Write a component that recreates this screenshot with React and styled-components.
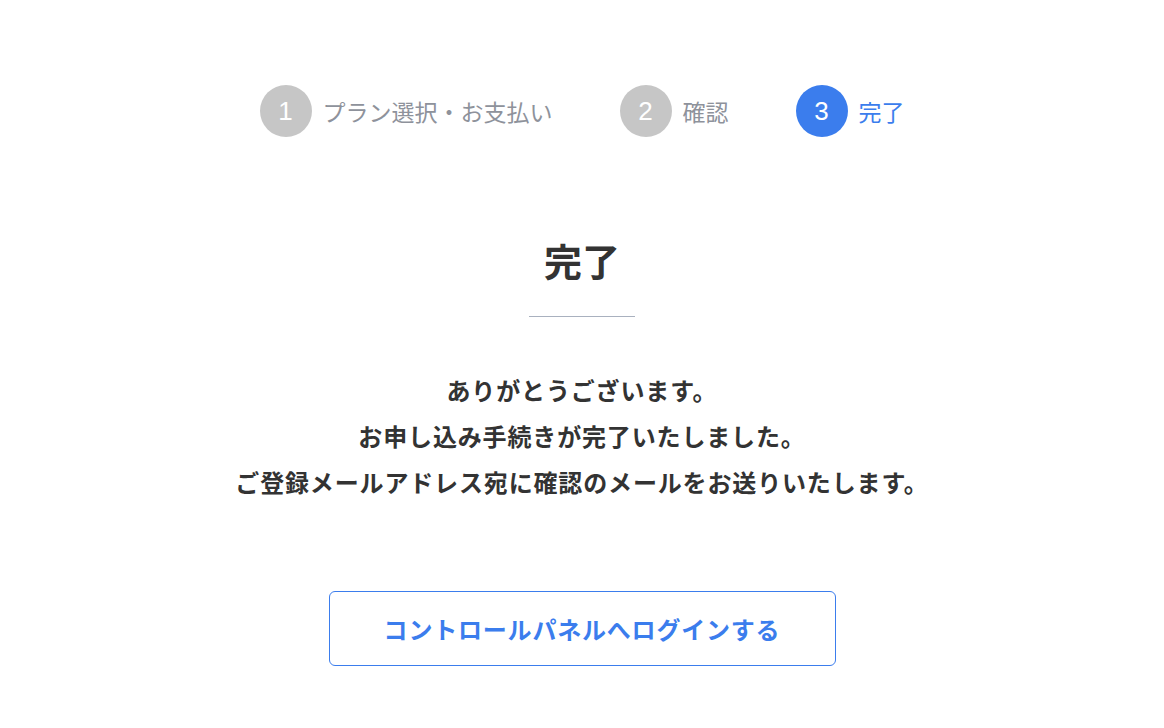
import React from 'react';
import styled, { createGlobalStyle } from 'styled-components';

const GlobalStyle = createGlobalStyle`
  html, body {
    margin: 0;
    padding: 0;
    background: #ffffff;
  }
  body {
    font-family: "Noto Sans CJK JP", "Noto Sans", sans-serif;
    color: #333333;
  }
`;

const Page = styled.main`
  display: flex;
  flex-direction: column;
  align-items: center;
  padding-top: 85px;
  min-height: 728px;
  box-sizing: border-box;
`;

const Steps = styled.ol`
  display: flex;
  align-items: center;
  gap: 67px;
  list-style: none;
  margin: 0;
  padding: 0;
`;

const Step = styled.li`
  display: flex;
  align-items: center;
  gap: 11px;
  color: ${({ active }) => (active ? '#3b7ded' : '#8e929b')};
  font-size: 23px;
  line-height: 1;
`;

const StepNumber = styled.span`
  width: 52px;
  height: 52px;
  border-radius: 50%;
  background: ${({ active }) => (active ? '#3b7ded' : '#c6c6c6')};
  color: #ffffff;
  display: flex;
  align-items: center;
  justify-content: center;
  font-family: "Liberation Sans", Arial, sans-serif;
  font-size: 26px;
`;

const Title = styled.h1`
  margin: 96px 0 0;
  font-size: 38px;
  line-height: 53px;
  font-weight: 700;
  color: #333333;
`;

const Divider = styled.hr`
  width: 106px;
  height: 1px;
  border: none;
  background: #a9b1bf;
  margin: 30px 0 0;
`;

const Message = styled.div`
  margin-top: 50px;
  text-align: center;
  font-size: 24px;
  line-height: 46px;
  font-weight: 700;
  letter-spacing: 0.85px;
  color: #333333;

  p {
    margin: 0;
  }
`;

const LoginButton = styled.button`
  margin-top: 86px;
  width: 507px;
  height: 75px;
  border: 1px solid #3b7ded;
  border-radius: 6px;
  background: #ffffff;
  color: #3b7ded;
  font-family: inherit;
  font-size: 24px;
  font-weight: 700;
  letter-spacing: 0.8px;
  cursor: pointer;
`;

const steps = [
  { n: 1, label: 'プラン選択・お支払い' },
  { n: 2, label: '確認' },
  { n: 3, label: '完了', active: true },
];

export default function App() {
  return (
    <>
      <GlobalStyle />
      <Page>
        <Steps>
          {steps.map(s => (
            <Step key={s.n} active={s.active}>
              <StepNumber active={s.active}>{s.n}</StepNumber>
              {s.label}
            </Step>
          ))}
        </Steps>
        <Title>完了</Title>
        <Divider />
        <Message>
          <p>ありがとうございます。</p>
          <p>お申し込み手続きが完了いたしました。</p>
          <p>ご登録メールアドレス宛に確認のメールをお送りいたします。</p>
        </Message>
        <LoginButton>コントロールパネルへログインする</LoginButton>
      </Page>
    </>
  );
}
